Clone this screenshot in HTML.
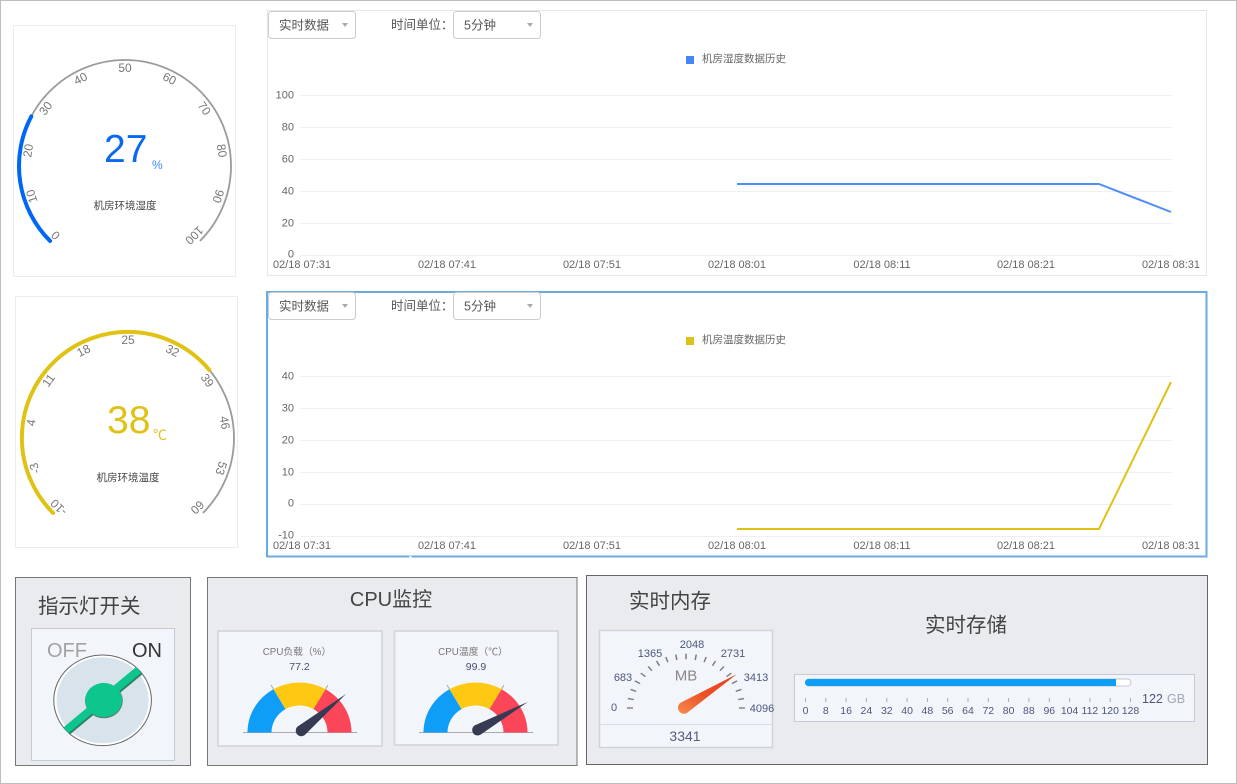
<!DOCTYPE html>
<html>
<head>
<meta charset="utf-8">
<style>
html,body{margin:0;padding:0;background:#fff;width:1237px;height:784px;overflow:hidden}
svg{display:block;position:absolute;left:0;top:0}
text{font-family:"Liberation Sans","Noto Sans CJK SC",sans-serif}
.m{text-anchor:middle}
.c{dominant-baseline:central}
.gl{font-size:12px;fill:#777;text-anchor:middle;dominant-baseline:central}
.ax{font-size:11px;fill:#666}
.axy{font-size:11px;fill:#666;text-anchor:end;dominant-baseline:central}
.sel{font-size:12.5px;fill:#555;dominant-baseline:central}
.leg{font-size:10.5px;fill:#666;dominant-baseline:central}
.grid line{stroke:#efefef;stroke-width:1}
.ml{font-size:11px;fill:#4e567c;text-anchor:middle;dominant-baseline:central}
.st{font-size:10.5px;fill:#4e567c;text-anchor:middle;dominant-baseline:central}
</style>
</head>
<body>
<svg width="1237" height="784" viewBox="0 0 1237 784" xmlns="http://www.w3.org/2000/svg">
<rect x="0.5" y="0.5" width="1236" height="783" fill="#fff" stroke="#bdbdbd"/>

<!-- humidity gauge -->
<rect x="13.5" y="25.5" width="222" height="251" fill="#fff" stroke="#ececec"/>
<path d="M50.05 240.95A106 106 0 1 1 199.95 240.95" fill="none" stroke="#9b9b9b" stroke-width="1.8"/>
<path d="M50.05 240.95A106 106 0 0 1 31.3 116.4" fill="none" stroke="#0067f5" stroke-width="4" stroke-linecap="round"/>
<g>
<text class="gl" x="125" y="68" transform="rotate(-135 125 166)">0</text>
<text class="gl" x="125" y="68" transform="rotate(-108 125 166)">10</text>
<text class="gl" x="125" y="68" transform="rotate(-81 125 166)">20</text>
<text class="gl" x="125" y="68" transform="rotate(-54 125 166)">30</text>
<text class="gl" x="125" y="68" transform="rotate(-27 125 166)">40</text>
<text class="gl" x="125" y="68">50</text>
<text class="gl" x="125" y="68" transform="rotate(27 125 166)">60</text>
<text class="gl" x="125" y="68" transform="rotate(54 125 166)">70</text>
<text class="gl" x="125" y="68" transform="rotate(81 125 166)">80</text>
<text class="gl" x="125" y="68" transform="rotate(108 125 166)">90</text>
<text class="gl" x="125" y="68" transform="rotate(135 125 166)">100</text>
</g>
<text x="104" y="162" font-size="39" fill="#0a68f0">27</text>
<text x="152" y="169" font-size="12" fill="#3a86f7">%</text>
<text class="m" x="125" y="209" font-size="10.5" fill="#444">机房环境湿度</text>

<!-- temperature gauge -->
<rect x="15.5" y="296.5" width="222" height="251" fill="#fff" stroke="#ececec"/>
<path d="M53.05 512.95A106 106 0 1 1 202.95 512.95" fill="none" stroke="#9b9b9b" stroke-width="1.8"/>
<path d="M53.05 512.95A106 106 0 1 1 209.3 370" fill="none" stroke="#e0c214" stroke-width="4" stroke-linecap="round"/>
<g>
<text class="gl" x="128" y="340" transform="rotate(-135 128 438)">-10</text>
<text class="gl" x="128" y="340" transform="rotate(-108 128 438)">-3</text>
<text class="gl" x="128" y="340" transform="rotate(-81 128 438)">4</text>
<text class="gl" x="128" y="340" transform="rotate(-54 128 438)">11</text>
<text class="gl" x="128" y="340" transform="rotate(-27 128 438)">18</text>
<text class="gl" x="128" y="340">25</text>
<text class="gl" x="128" y="340" transform="rotate(27 128 438)">32</text>
<text class="gl" x="128" y="340" transform="rotate(54 128 438)">39</text>
<text class="gl" x="128" y="340" transform="rotate(81 128 438)">46</text>
<text class="gl" x="128" y="340" transform="rotate(108 128 438)">53</text>
<text class="gl" x="128" y="340" transform="rotate(135 128 438)">60</text>
</g>
<text x="107" y="433" font-size="39" fill="#e0c214">38</text>
<text x="153" y="440" font-size="14" fill="#e0c214">℃</text>
<text class="m" x="128" y="481" font-size="10.5" fill="#444">机房环境温度</text>

<!-- chart 1 -->
<rect x="267.5" y="10.5" width="939" height="265" fill="#fff" stroke="#e6e6e6"/>
<rect x="268.5" y="11.5" width="87" height="27" rx="3" fill="#fff" stroke="#ccc"/>
<text class="sel" x="279" y="25.5">实时数据</text>
<path d="M342 23h6l-3 4z" fill="#aaa"/>
<text class="sel" x="391" y="25">时间单位：</text>
<rect x="453.5" y="11.5" width="87" height="27" rx="3" fill="#fff" stroke="#ccc"/>
<text class="sel" x="464" y="25.5">5分钟</text>
<path d="M527 23h6l-3 4z" fill="#aaa"/>
<rect x="686" y="56" width="8" height="8" fill="#4585f5"/>
<text class="leg" x="702" y="59">机房湿度数据历史</text>
<g class="grid">
<line x1="301" x2="1171" y1="95.5" y2="95.5"/>
<line x1="301" x2="1171" y1="127.5" y2="127.5"/>
<line x1="301" x2="1171" y1="159.5" y2="159.5"/>
<line x1="301" x2="1171" y1="191.5" y2="191.5"/>
<line x1="301" x2="1171" y1="223.5" y2="223.5"/>
<line x1="301" x2="1171" y1="255.5" y2="255.5"/>
</g>
<text class="axy" x="294" y="95.5">100</text>
<text class="axy" x="294" y="127.5">80</text>
<text class="axy" x="294" y="159.5">60</text>
<text class="axy" x="294" y="191.5">40</text>
<text class="axy" x="294" y="223.5">20</text>
<text class="axy" x="294" y="254.5">0</text>
<polyline points="737,184 1099,184 1171,212" fill="none" stroke="#4f8df7" stroke-width="2"/>
<g text-anchor="middle">
<text class="ax" x="302" y="268">02/18 07:31</text>
<text class="ax" x="447" y="268">02/18 07:41</text>
<text class="ax" x="592" y="268">02/18 07:51</text>
<text class="ax" x="737" y="268">02/18 08:01</text>
<text class="ax" x="882" y="268">02/18 08:11</text>
<text class="ax" x="1026" y="268">02/18 08:21</text>
<text class="ax" x="1171" y="268">02/18 08:31</text>
</g>

<!-- chart 2 -->
<rect x="267" y="292" width="939.5" height="264.5" fill="#fff" stroke="#6cabe0" stroke-width="2"/>
<rect x="409.5" y="556" width="2" height="2" fill="#fff"/>
<rect x="268.5" y="292.5" width="87" height="27" rx="3" fill="#fff" stroke="#ccc"/>
<text class="sel" x="279" y="306.5">实时数据</text>
<path d="M342 304h6l-3 4z" fill="#aaa"/>
<text class="sel" x="391" y="306">时间单位：</text>
<rect x="453.5" y="292.5" width="87" height="27" rx="3" fill="#fff" stroke="#ccc"/>
<text class="sel" x="464" y="306.5">5分钟</text>
<path d="M527 304h6l-3 4z" fill="#aaa"/>
<rect x="686" y="337" width="8" height="8" fill="#e0c214"/>
<text class="leg" x="702" y="340">机房温度数据历史</text>
<g class="grid">
<line x1="301" x2="1171" y1="376.5" y2="376.5"/>
<line x1="301" x2="1171" y1="408.5" y2="408.5"/>
<line x1="301" x2="1171" y1="440.5" y2="440.5"/>
<line x1="301" x2="1171" y1="472.5" y2="472.5"/>
<line x1="301" x2="1171" y1="504.5" y2="504.5"/>
<line x1="301" x2="1171" y1="536.5" y2="536.5"/>
</g>
<text class="axy" x="294" y="376.5">40</text>
<text class="axy" x="294" y="408.5">30</text>
<text class="axy" x="294" y="440.5">20</text>
<text class="axy" x="294" y="472.5">10</text>
<text class="axy" x="294" y="503.5">0</text>
<text class="axy" x="294" y="535.5">-10</text>
<polyline points="737,529 1099,529 1171,382" fill="none" stroke="#e0c214" stroke-width="2"/>
<g text-anchor="middle">
<text class="ax" x="302" y="549">02/18 07:31</text>
<text class="ax" x="447" y="549">02/18 07:41</text>
<text class="ax" x="592" y="549">02/18 07:51</text>
<text class="ax" x="737" y="549">02/18 08:01</text>
<text class="ax" x="882" y="549">02/18 08:11</text>
<text class="ax" x="1026" y="549">02/18 08:21</text>
<text class="ax" x="1171" y="549">02/18 08:31</text>
</g>

<!-- switch panel -->
<rect x="15.5" y="577.5" width="175" height="188" fill="#e9ebef" stroke="#777"/>
<text x="38" y="613" font-size="20.5" fill="#444">指示灯开关</text>
<rect x="31.5" y="628.5" width="143" height="132" fill="#f2f6fa" stroke="#c4cad6"/>
<text x="47" y="657" font-size="20" fill="#a2a2a2">OFF</text>
<text x="132" y="657" font-size="20" fill="#333">ON</text>
<ellipse cx="102.6" cy="700.3" rx="48.8" ry="45.3" fill="#fff" stroke="#666" stroke-width="1"/>
<ellipse cx="102.6" cy="700.3" rx="46" ry="43" fill="#d8e3ec"/>
<line x1="66.7" y1="731" x2="139.3" y2="670.7" stroke="#2f8068" stroke-width="9.5"/>
<ellipse cx="103.9" cy="700.7" rx="18.9" ry="17.6" fill="#55806f"/>
<line x1="66" y1="730.2" x2="138.7" y2="669.9" stroke="#0cc68d" stroke-width="7.5"/>
<ellipse cx="103.7" cy="700" rx="18.4" ry="17.1" fill="#0cc68d"/>

<!-- CPU panel -->
<rect x="207.5" y="577.5" width="369.5" height="188" fill="#e9ebef" stroke="#777"/>
<text class="m" x="391" y="606" font-size="20" fill="#444">CPU监控</text>
<rect x="218" y="631" width="164" height="115" fill="#f2f6fa" stroke="#d5d9e0" stroke-width="2"/>
<text class="m" x="297" y="655" font-size="9.8" fill="#777">CPU负载（%）</text>
<text class="m" x="299.5" y="670" font-size="10.5" fill="#4a5070">77.2</text>
<rect x="394.5" y="631" width="163.5" height="114" fill="#f2f6fa" stroke="#d5d9e0" stroke-width="2"/>
<text class="m" x="473" y="655" font-size="9.8" fill="#777">CPU温度（℃）</text>
<text class="m" x="476" y="670" font-size="10.5" fill="#4a5070">99.9</text>
<g>
<line x1="243" x2="357" y1="732.5" y2="732.5" stroke="#aaa"/>
<path d="M273.5 689.2L271 685M325.5 689.2L328 685" stroke="#aaa"/>
<path d="M247.5 732.5A52 50 0 0 1 273.5 689.2L285.5 709.1A28 27 0 0 0 271.5 732.5Z" fill="#0e9df7"/>
<path d="M273.5 689.2A52 50 0 0 1 325.5 689.2L313.5 709.1A28 27 0 0 0 285.5 709.1Z" fill="#ffc813"/>
<path d="M325.5 689.2A52 50 0 0 1 351.5 732.5L327.5 732.5A28 27 0 0 0 313.5 709.1Z" fill="#fb4558"/>
</g>
<path d="M346 694L304.8 735A5.5 5.5 0 0 1 297.8 726.4Z" fill="#363a52"/>
<g transform="translate(176 0)">
<line x1="243" x2="357" y1="732.5" y2="732.5" stroke="#aaa"/>
<path d="M273.5 689.2L271 685M325.5 689.2L328 685" stroke="#aaa"/>
<path d="M247.5 732.5A52 50 0 0 1 273.5 689.2L285.5 709.1A28 27 0 0 0 271.5 732.5Z" fill="#0e9df7"/>
<path d="M273.5 689.2A52 50 0 0 1 325.5 689.2L313.5 709.1A28 27 0 0 0 285.5 709.1Z" fill="#ffc813"/>
<path d="M325.5 689.2A52 50 0 0 1 351.5 732.5L327.5 732.5A28 27 0 0 0 313.5 709.1Z" fill="#fb4558"/>
</g>
<path d="M527.7 702L480.4 734.8A5.5 5.5 0 0 1 475 725.2Z" fill="#363a52"/>

<!-- memory / storage panel -->
<rect x="586.5" y="575.5" width="621" height="189" fill="#e9ebef" stroke="#666"/>
<text x="629" y="608" font-size="20.5" fill="#444">实时内存</text>
<rect x="599.5" y="630.5" width="173" height="117" fill="#f2f6fa" stroke="#cfd4dc" stroke-width="1.5"/>
<line x1="600" x2="772" y1="724.5" y2="724.5" stroke="#d8dce3"/>
<g transform="translate(686 708) scale(1 0.92)" stroke="#7d7d7d" stroke-width="1.5">
<line y1="-59" y2="-53" transform="rotate(-90)"/>
<line y1="-59" y2="-53" transform="rotate(-80)"/>
<line y1="-59" y2="-53" transform="rotate(-70)"/>
<line y1="-59" y2="-53" transform="rotate(-60)"/>
<line y1="-59" y2="-53" transform="rotate(-50)"/>
<line y1="-59" y2="-53" transform="rotate(-40)"/>
<line y1="-59" y2="-53" transform="rotate(-30)"/>
<line y1="-59" y2="-53" transform="rotate(-20)"/>
<line y1="-59" y2="-53" transform="rotate(-10)"/>
<line y1="-59" y2="-53"/>
<line y1="-59" y2="-53" transform="rotate(10)"/>
<line y1="-59" y2="-53" transform="rotate(20)"/>
<line y1="-59" y2="-53" transform="rotate(30)"/>
<line y1="-59" y2="-53" transform="rotate(40)"/>
<line y1="-59" y2="-53" transform="rotate(50)"/>
<line y1="-59" y2="-53" transform="rotate(60)"/>
<line y1="-59" y2="-53" transform="rotate(70)"/>
<line y1="-59" y2="-53" transform="rotate(80)"/>
<line y1="-59" y2="-53" transform="rotate(90)"/>
</g>
<text class="ml" x="614" y="708">0</text>
<text class="ml" x="623" y="678">683</text>
<text class="ml" x="650" y="654">1365</text>
<text class="ml" x="692" y="645">2048</text>
<text class="ml" x="733" y="654">2731</text>
<text class="ml" x="756" y="678">3413</text>
<text class="ml" x="762" y="709">4096</text>
<text class="m c" x="686" y="676" font-size="15" fill="#888">MB</text>
<defs><linearGradient id="og" x1="0" y1="1" x2="1" y2="0"><stop offset="0" stop-color="#f78a4c"/><stop offset="0.45" stop-color="#ec5226"/><stop offset="1" stop-color="#e63c1a"/></linearGradient></defs>
<path d="M736.7 674.3L687.2 712.8A6 6 0 0 1 680.8 702.6Z" fill="url(#og)"/>
<text class="m c" x="685" y="736" font-size="14" fill="#555c80">3341</text>

<text class="m" x="966" y="632" font-size="20.5" fill="#444">实时存储</text>
<rect x="794.5" y="674.5" width="400" height="47" fill="#f2f6fa" stroke="#c4cad6"/>
<rect x="805.5" y="679" width="325.5" height="7" rx="3.5" fill="#fff" stroke="#c4cad6"/>
<path d="M808.5 679H1116V686H808.5A3.5 3.5 0 0 1 808.5 679Z" fill="#0e9df7"/>
<path d="M805.5 698v4M825.8 698v4M846.1 698v4M866.4 698v4M886.8 698v4M907.1 698v4M927.4 698v4M947.7 698v4M968 698v4M988.3 698v4M1008.6 698v4M1028.9 698v4M1049.3 698v4M1069.6 698v4M1089.9 698v4M1110.2 698v4M1130.5 698v4" stroke="#aaa" fill="none"/>
<text class="st" x="805.5" y="711">0</text>
<text class="st" x="825.8" y="711">8</text>
<text class="st" x="846.1" y="711">16</text>
<text class="st" x="866.4" y="711">24</text>
<text class="st" x="886.8" y="711">32</text>
<text class="st" x="907.1" y="711">40</text>
<text class="st" x="927.4" y="711">48</text>
<text class="st" x="947.7" y="711">56</text>
<text class="st" x="968" y="711">64</text>
<text class="st" x="988.3" y="711">72</text>
<text class="st" x="1008.6" y="711">80</text>
<text class="st" x="1028.9" y="711">88</text>
<text class="st" x="1049.3" y="711">96</text>
<text class="st" x="1069.6" y="711">104</text>
<text class="st" x="1089.9" y="711">112</text>
<text class="st" x="1110.2" y="711">120</text>
<text class="st" x="1130.5" y="711">128</text>
<text x="1142" y="703" font-size="12.5" fill="#4e567c">122</text>
<text x="1167" y="703" font-size="12.5" fill="#a0a6b8">GB</text>
</svg>
</body>
</html>
